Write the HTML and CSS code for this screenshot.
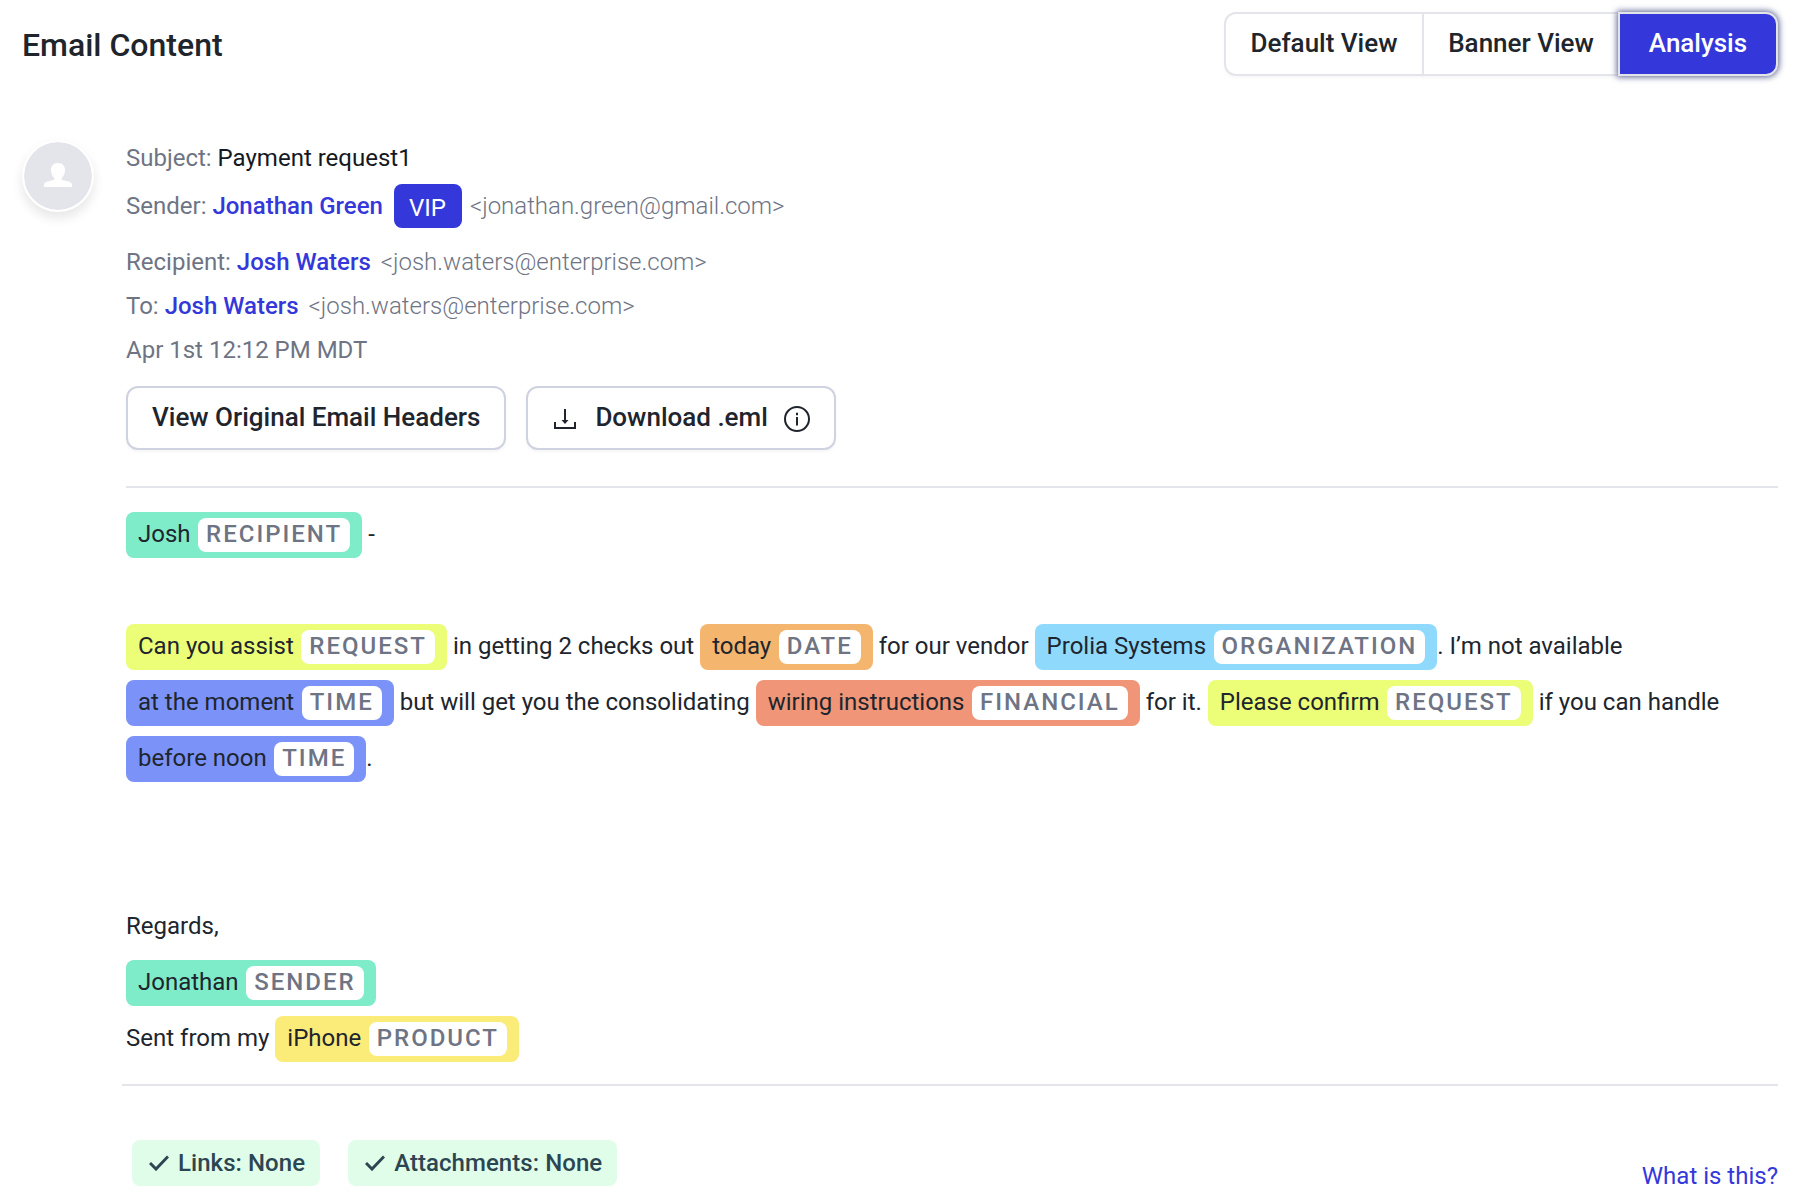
FILE: index.html
```html
<!DOCTYPE html>
<html lang="en">
<head>
    <meta charset="UTF-8">
    <meta name="viewport" content="width=device-width, initial-scale=1.0">
    <title>Email Content</title>
    <link rel="stylesheet" href="styles.css">
</head>
<body>

    <header class="header">
        <h2>Email Content</h2>
        <div class="tabs">
            <button class="tab">Default View</button>
            <button class="tab">Banner View</button>
            <button class="tab active">Analysis</button>
        </div>
    </header>

    <main class="email">
        <div class="avatar">
            <svg width="28" height="24" viewBox="0 0 28 24" fill="#fff">
                <path d="M14 0c4.400 0 7 2.800 7 7 0 3.600-1.500 6.200-3.200 8.100-.6.9-.3 1.700.7 2l6 1.500c2.300.6 3.500 1.800 3.500 3.600V24H0v-1.800c0-1.800 1.200-3 3.500-3.600l6-1.500c1-.3 1.300-1.100.7-2C8.500 13.200 7 10.600 7 7c0-4.200 2.600-7 7-7z"/>
            </svg>
        </div>

        <div class="content">
            <div class="row">Subject: <span class="subject">Payment request1</span></div>
            <div class="row sender">
                <span>Sender: <a class="name">Jonathan Green</a></span>
                <span class="vip">VIP</span>
                <span class="address">&lt;jonathan.green@gmail.com&gt;</span>
            </div>
            <div class="row">Recipient: <a class="name">Josh Waters</a> <span class="address">&lt;josh.waters@enterprise.com&gt;</span></div>
            <div class="row">To: <a class="name">Josh Waters</a> <span class="address">&lt;josh.waters@enterprise.com&gt;</span></div>
            <div class="row">Apr 1st 12:12 PM MDT</div>

            <div class="actions">
                <button class="btn">View Original Email Headers</button>
                <button class="btn">
                    <svg class="icon-download" width="22" height="20" viewBox="0 0 22 20" fill="none" stroke="#20252d" stroke-width="2">
                        <path d="M1 13v6h20v-6"/>
                        <path d="M11 0v12"/>
                        <path d="M7.500 11h7L11 15z" fill="#20252d" stroke="none"/>
                    </svg>
                    <span>Download .eml</span>
                    <svg class="icon-info" width="26" height="26" viewBox="0 0 26 26" fill="none" stroke="#20252d" stroke-width="2">
                        <circle cx="13" cy="13" r="12"/>
                        <path d="M13 11v8.500M13 6.800v2.400"/>
                    </svg>
                </button>
            </div>

            <div class="body">
                <p><span class="tag person">Josh<span class="label">RECIPIENT</span></span> -</p>
                <p class="message">
                    <span class="tag request">Can you assist<span class="label">REQUEST</span></span>
                    in getting 2 checks out
                    <span class="tag date">today<span class="label">DATE</span></span>
                    for our vendor
                    <span class="tag organization">Prolia Systems<span class="label">ORGANIZATION</span></span>. I’m not available
                    <span class="tag time">at the moment<span class="label">TIME</span></span>
                    but will get you the consolidating
                    <span class="tag financial">wiring instructions<span class="label">FINANCIAL</span></span>
                    for it.
                    <span class="tag request">Please confirm<span class="label">REQUEST</span></span>
                    if you can handle
                    <span class="tag time">before noon<span class="label">TIME</span></span>.
                </p>
                <p>Regards,</p>
                <p><span class="tag person">Jonathan<span class="label">SENDER</span></span></p>
                <p>Sent from my <span class="tag product">iPhone<span class="label">PRODUCT</span></span></p>
            </div>

            <footer class="footer">
                <span class="pill">
                    <svg width="20" height="16" viewBox="0 0 20 16" fill="none" stroke="#2c4552" stroke-width="3">
                        <path d="M1 8l6 6L19 1.500"/>
                    </svg>
                    Links: None
                </span>
                <span class="pill">
                    <svg width="20" height="16" viewBox="0 0 20 16" fill="none" stroke="#2c4552" stroke-width="3">
                        <path d="M1 8l6 6L19 1.500"/>
                    </svg>
                    Attachments: None
                </span>
                <a class="help">What is this?</a>
            </footer>
        </div>
    </main>

</body>
</html>
```

FILE: styles.css
```css
* {
    box-sizing: border-box;
}
body {
    margin: 0;
    padding: 12px 32px 0 22px;
    font-family: Roboto, sans-serif;
    font-size: 24px;
    color: #20252d;
    background: #fff;
}
h2, p {
    margin: 0;
}
button {
    font-family: inherit;
    font-size: 26px;
    font-weight: 500;
    color: #20252d;
    background: #fff;
    cursor: pointer;
}
.header {
    display: flex;
    justify-content: space-between;
    height: 64px;
}
h2 {
    font-size: 32px;
    font-weight: 500;
    line-height: 66px;
}
.tabs {
    display: flex;
}
.tab {
    width: 200px;
    height: 64px;
    padding: 0 0 2px;
    border: 2px solid #e4e5eb;
    box-shadow: 0 2px 3px rgba(0, 0, 0, 0.03);
}
.tab + .tab {
    width: 198px;
    margin-left: -2px;
}
.tab:first-child {
    border-radius: 12px 0 0 12px;
}
.tab.active {
    width: 160px;
    color: #fff;
    background: #3438da;
    border-radius: 0 12px 12px 0;
    box-shadow: 0 0 6px 1px #5a628f;
}
.email {
    display: flex;
    padding-top: 60px;
}
.avatar {
    display: flex;
    align-items: center;
    justify-content: center;
    width: 72px;
    height: 72px;
    margin: 4px 32px 0 0;
    padding-bottom: 2px;
    border: 2px solid #fff;
    border-radius: 50%;
    background: #e4e5eb;
    background-clip: padding-box;
    box-shadow: 0 6px 12px rgba(0, 0, 0, 0.1);
}
.content {
    flex: 1;
}
.row {
    line-height: 44px;
    color: #6e7484;
}
.subject {
    color: #15191f;
}
.sender {
    display: flex;
    height: 56px;
    margin-top: 4px;
}
.name {
    font-weight: 500;
    color: #3438da;
}
.vip {
    height: 44px;
    margin: 0 8px 0 11px;
    padding: 4px 16px 0 15px;
    line-height: 40px;
    color: #fff;
    background: #3438da;
    border-radius: 8px;
}
.address {
    font-weight: 300;
}
.name + .address {
    margin-left: 4px;
}
.actions {
    display: flex;
    gap: 20px;
    margin-top: 14px;
    padding-bottom: 36px;
    border-bottom: 2px solid #e4e5eb;
}
.btn {
    display: flex;
    align-items: center;
    height: 64px;
    padding: 0 24px 2px;
    border: 2px solid #cfd2e0;
    border-radius: 12px;
    box-shadow: 0 2px 3px rgba(0, 0, 0, 0.04);
}
.icon-download {
    margin: 4px 19px 0 2px;
}
.icon-info {
    margin: 4px 0 0 16px;
}
.body {
    padding-top: 18px;
    line-height: 56px;
}
.message {
    margin: 56px 0 112px;
}
.tag {
    padding: 8px 12px 10px;
    border-radius: 8px;
    white-space: nowrap;
}
.label {
    margin-left: 7.5px;
    padding: 2px 8px 4px;
    border-radius: 8px;
    font-weight: 500;
    letter-spacing: 2px;
    color: #6e7484;
    background: #fff;
}
.person {
    background: #7eebc9;
}
.request {
    background: #ecfd78;
}
.date {
    background: #f4b66e;
}
.organization {
    background: #8fdafc;
}
.time {
    background: #7b93f8;
}
.financial {
    background: #f09577;
}
.product {
    background: #fbec7a;
}
.footer {
    display: flex;
    gap: 28px;
    margin: 18px 0 0 -4px;
    padding: 54px 0 0 10px;
    border-top: 2px solid #e4e5eb;
}
.pill {
    display: flex;
    align-items: center;
    gap: 9px;
    height: 46px;
    padding: 0 15px 0 17px;
    font-weight: 500;
    letter-spacing: 0.06px;
    color: #2c4552;
    background: #e0fde9;
    border-radius: 8px;
}
.help {
    margin: 22px 0 0 auto;
    color: #3438da;
}
```
